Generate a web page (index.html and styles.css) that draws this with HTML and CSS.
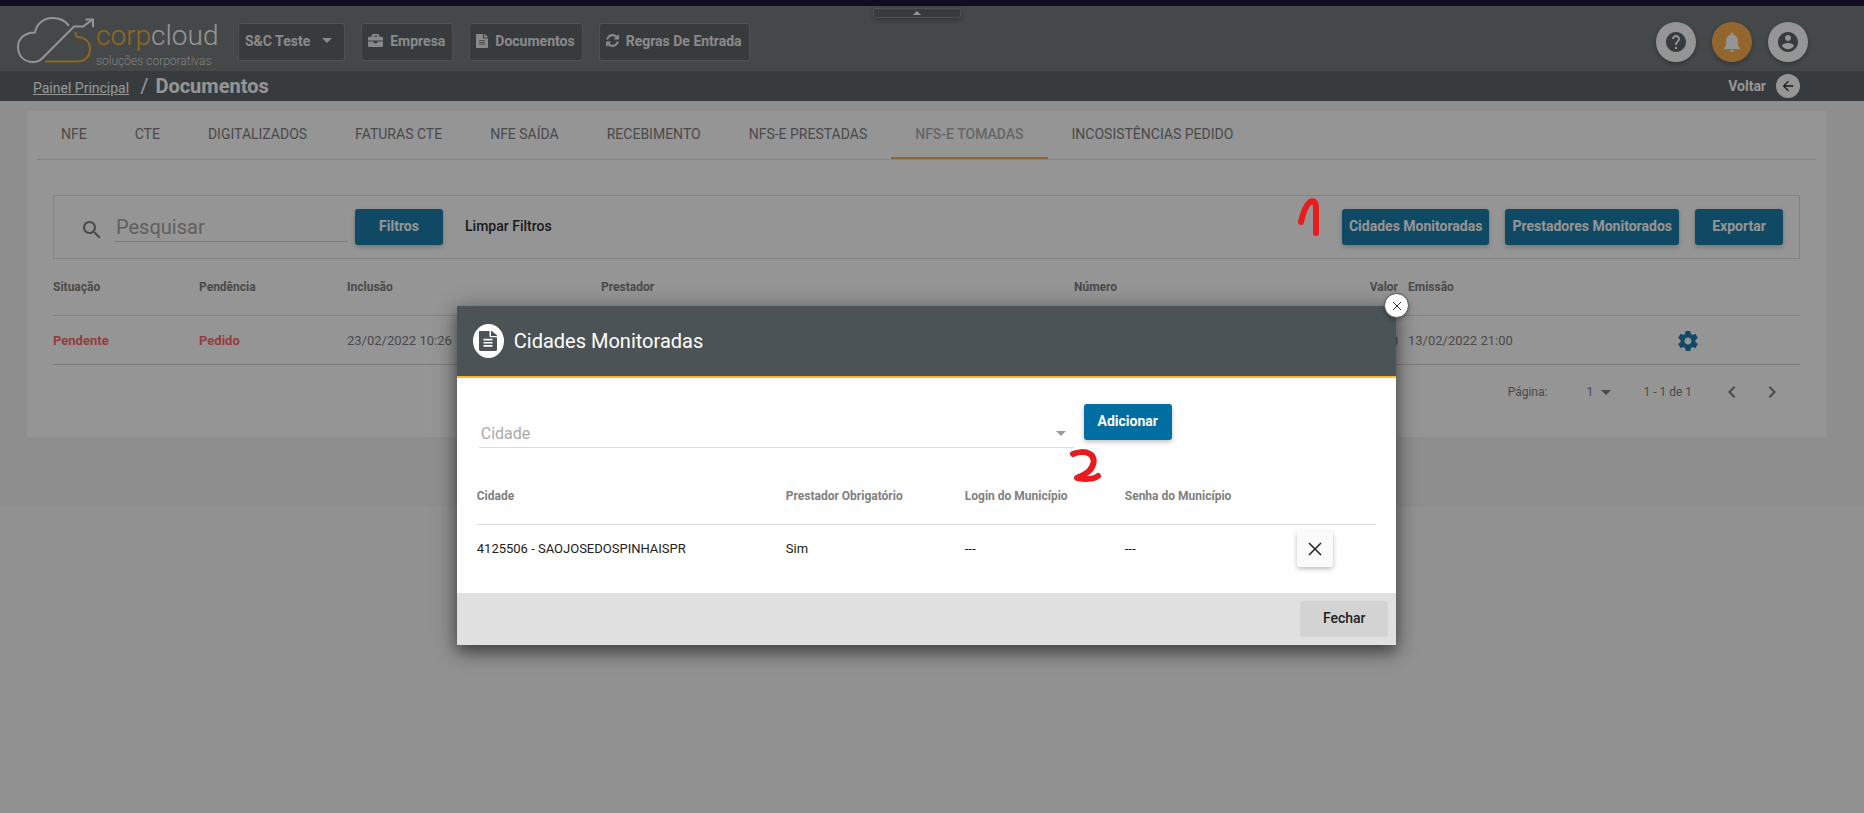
FILE: index.html
```html
<!DOCTYPE html>
<html lang="pt-BR">
<head>
<meta charset="utf-8">
<title>Corpcloud - Documentos</title>
<link rel="stylesheet" href="styles.css">
</head>
<body>
<div class="top-strip"></div>
<div class="app">
  <header class="header">
    <a class="logo" href="#" aria-label="Corpcloud">
      <svg class="logo-mark" viewBox="0 0 80 50" width="80" height="50" fill="none" stroke-width="2">
        <path stroke="#fff" d="M52 9C48 3 42 1 35.500 1 26.500 1 19.500 7 18 15.500 8 15.500 1 21.500 1 30 1 39 7 45 16.500 45 20 45 22.500 44 25 41.500L57 9.500H66L75 3"/>
        <path stroke="#fff" d="M68.500 2.500H76V10"/>
        <path stroke="#f7a81b" d="M58 15 60 20C68 20 73 25 73 32 73 40 67.500 44.500 59.500 44.500H28"/>
      </svg>
      <span class="logo-words">
        <span class="logo-name"><span class="logo-corp">corp</span>cloud</span>
        <span class="logo-tag">soluções corporativas</span>
      </span>
    </a>
    <nav class="nav">
      <button class="nav-btn nav-account" type="button">S&amp;C Teste <span class="caret"></span></button>
      <button class="nav-btn" type="button"><svg viewBox="0 0 512 512" width="15" height="15"><path d="M320 336c0 8.840-7.160 16-16 16h-96c-8.840 0-16-7.160-16-16v-48H0v144c0 25.600 22.400 48 48 48h416c25.600 0 48-22.400 48-48V288H320v48zm144-208h-80V80c0-25.600-22.400-48-48-48H176c-25.600 0-48 22.400-48 48v48H48c-25.600 0-48 22.400-48 48v80h512v-80c0-25.600-22.400-48-48-48zm-144 0H192V96h128v32z"/></svg>Empresa</button>
      <button class="nav-btn" type="button"><svg viewBox="0 0 384 512" width="12" height="14" preserveAspectRatio="none"><path d="M224 136V0H24C10.700 0 0 10.700 0 24v464c0 13.300 10.700 24 24 24h336c13.300 0 24-10.700 24-24V160H248c-13.200 0-24-10.800-24-24zm64 236c0 6.600-5.400 12-12 12H108c-6.600 0-12-5.400-12-12v-8c0-6.600 5.400-12 12-12h168c6.600 0 12 5.400 12 12v8zm0-64c0 6.600-5.400 12-12 12H108c-6.600 0-12-5.400-12-12v-8c0-6.600 5.400-12 12-12h168c6.600 0 12 5.400 12 12v8zm0-72v8c0 6.600-5.400 12-12 12H108c-6.600 0-12-5.400-12-12v-8c0-6.600 5.400-12 12-12h168c6.600 0 12 5.400 12 12zm96-114.100v6.100H256V0h6.100c6.400 0 12.500 2.500 17 7l97.900 98c4.500 4.500 7 10.600 7 16.900z"/></svg>Documentos</button>
      <button class="nav-btn" type="button"><svg viewBox="0 0 1536 1536" width="13" height="13"><path d="M1511 928q0 5-1 7-64 268-268 434.500t-478 166.500q-146 0-282.500-55t-243.500-157l-129 129q-19 19-45 19t-45-19-19-45v-448q0-26 19-45t45-19h448q26 0 45 19t19 45-19 45l-137 137q71 66 161 102t187 36q134 0 250-65t186-179q11-17 53-117 8-23 30-23h192q13 0 22.500 9.500t9.500 22.500zm25-800v448q0 26-19 45t-45 19h-448q-26 0-45-19t-19-45 19-45l138-138q-148-137-349-137-134 0-250 65t-186 179q-11 17-53 117-8 23-30 23h-199q-13 0-22.500-9.500t-9.500-22.500v-7q65-268 270-434.500t480-166.500q146 0 284 55.500t245 156.500l130-129q19-19 45-19t45 19 19 45z"/></svg>Regras De Entrada</button>
    </nav>
    <div class="header-actions">
      <button class="round" type="button" aria-label="Ajuda"><svg viewBox="0 0 24 24" width="24" height="24"><path d="M12 2C6.480 2 2 6.480 2 12s4.480 10 10 10 10-4.480 10-10S17.520 2 12 2zm1 17h-2v-2h2v2zm2.070-7.750l-.9.920C13.450 12.900 13 13.500 13 15h-2v-.5c0-1.100.45-2.100 1.170-2.830l1.240-1.260c.37-.36.59-.86.59-1.410 0-1.100-.9-2-2-2s-2 .9-2 2H8c0-2.210 1.790-4 4-4s4 1.790 4 4c0 .88-.36 1.680-.93 2.250z"/></svg></button>
      <button class="round round-alert" type="button" aria-label="Notificações"><svg viewBox="0 0 24 24" width="24" height="24"><path d="M12 22c1.100 0 2-.9 2-2h-4c0 1.100.89 2 2 2zm6-6v-5c0-3.070-1.640-5.640-4.500-6.320V4c0-.83-.67-1.500-1.500-1.500s-1.500.67-1.500 1.500v.68C7.630 5.360 6 7.920 6 11v5l-2 2v1h16v-1l-2-2z"/></svg></button>
      <button class="round" type="button" aria-label="Conta"><svg viewBox="0 0 24 24" width="24" height="24"><path d="M12 2C6.480 2 2 6.480 2 12s4.480 10 10 10 10-4.480 10-10S17.520 2 12 2zm0 3c1.660 0 3 1.340 3 3s-1.340 3-3 3-3-1.340-3-3 1.340-3 3-3zm0 14.200c-2.500 0-4.710-1.280-6-3.220.03-1.990 4-3.080 6-3.080 1.990 0 5.970 1.090 6 3.080-1.290 1.940-3.500 3.220-6 3.220z"/></svg></button>
    </div>
    <button class="collapse" type="button" aria-label="Recolher cabeçalho"><span class="caret-up"></span></button>
  </header>
  <div class="crumbs">
    <a class="crumb-link" href="#">Painel Principal</a>
    <span class="crumb-sep">/</span>
    <h1 class="crumb-title">Documentos</h1>
    <button class="back" type="button">Voltar<span class="back-icon"><svg viewBox="0 0 24 24" width="16" height="16"><path d="M20 11H7.830l5.590-5.590L12 4l-8 8 8 8 1.410-1.410L7.830 13H20v-2z"/></svg></span></button>
  </div>
  <div class="stage">
    <main class="card">
      <div class="tabs" role="tablist">
        <button class="tab" role="tab" type="button">NFE</button>
        <button class="tab" role="tab" type="button">CTE</button>
        <button class="tab" role="tab" type="button">DIGITALIZADOS</button>
        <button class="tab" role="tab" type="button">FATURAS CTE</button>
        <button class="tab" role="tab" type="button">NFE SAÍDA</button>
        <button class="tab" role="tab" type="button">RECEBIMENTO</button>
        <button class="tab" role="tab" type="button">NFS-E PRESTADAS</button>
        <button class="tab tab-active" role="tab" type="button" aria-selected="true">NFS-E TOMADAS</button>
        <button class="tab" role="tab" type="button">INCOSISTÊNCIAS PEDIDO</button>
      </div>
      <div class="content">
        <div class="toolbar">
          <label class="search-icon" for="search" aria-label="Pesquisar"><svg viewBox="0 0 24 24" width="24" height="24"><path d="M15.500 14h-.79l-.28-.27C15.410 12.590 16 11.110 16 9.500 16 5.910 13.090 3 9.500 3S3 5.910 3 9.500 5.910 16 9.500 16c1.610 0 3.090-.59 4.230-1.570l.27.28v.79l5 4.990L20.490 19l-4.990-5zm-6 0C7.010 14 5 11.990 5 9.500S7.010 5 9.500 5 14 7.010 14 9.500 11.990 14 9.500 14z"/></svg></label>
          <input class="search" id="search" type="text" placeholder="Pesquisar">
          <button class="btn" type="button">Filtros</button>
          <button class="btn-flat" type="button">Limpar Filtros</button>
          <div class="toolbar-end">
            <button class="btn" type="button">Cidades Monitoradas</button>
            <button class="btn" type="button">Prestadores Monitorados</button>
            <button class="btn" type="button">Exportar</button>
          </div>
        </div>
        <table class="grid docs">
          <colgroup><col class="d1"><col class="d2"><col class="d3"><col class="d4"><col class="d5"><col class="d6"><col class="d7"><col class="d8"></colgroup>
          <thead><tr><th>Situação</th><th>Pendência</th><th>Inclusão</th><th>Prestador</th><th>Número</th><th class="num">Valor</th><th>Emissão</th><th></th></tr></thead>
          <tbody><tr><td class="warn">Pendente</td><td class="warn">Pedido</td><td>23/02/2022 10:26</td><td></td><td></td><td class="num">0</td><td>13/02/2022 21:00</td>
          <td><button class="gear" type="button" aria-label="Opções"><svg viewBox="0 0 24 24" width="24" height="24"><path d="M19.430 12.980c.04-.32.07-.64.07-.98s-.03-.66-.07-.98l2.110-1.650c.19-.15.24-.42.12-.64l-2-3.460c-.12-.22-.39-.3-.61-.22l-2.490 1c-.52-.4-1.080-.73-1.690-.98l-.38-2.650C14.460 2.180 14.250 2 14 2h-4c-.25 0-.46.18-.49.42l-.38 2.650c-.61.25-1.170.59-1.690.98l-2.490-1c-.23-.09-.49 0-.61.22l-2 3.460c-.13.22-.07.49.12.64l2.110 1.650c-.04.32-.07.65-.07.98s.03.66.07.98l-2.110 1.650c-.19.15-.24.42-.12.64l2 3.460c.12.22.39.3.61.22l2.490-1c.52.4 1.080.73 1.690.98l.38 2.650c.03.24.24.42.49.42h4c.25 0 .46-.18.49-.42l.38-2.650c.61-.25 1.170-.59 1.690-.98l2.490 1c.23.09.49 0 .61-.22l2-3.460c.12-.22.07-.49-.12-.64l-2.110-1.650zM12 15.500c-1.930 0-3.500-1.570-3.500-3.500s1.570-3.500 3.500-3.500 3.500 1.570 3.500 3.500-1.570 3.500-3.500 3.500z"/></svg></button></td></tr></tbody>
        </table>
        <div class="pager">
          <label for="page">Página:</label>
          <span class="page-pick"><select class="page-select" id="page"><option>1</option></select><span class="caret"></span></span>
          <span>1 - 1 de 1</span>
          <button class="step" type="button" aria-label="Anterior"><svg viewBox="0 0 24 24" width="24" height="24"><path d="M15.410 7.410L14 6l-6 6 6 6 1.410-1.410L10.830 12z"/></svg></button>
          <button class="step" type="button" aria-label="Próxima"><svg viewBox="0 0 24 24" width="24" height="24"><path d="M10 6L8.590 7.410 13.170 12l-4.580 4.590L10 18l6-6z"/></svg></button>
        </div>
      </div>
    </main>
  </div>
</div>
<div class="backdrop">
  <section class="modal" role="dialog" aria-labelledby="modal-title">
    <button class="close" type="button" aria-label="Fechar janela"><svg viewBox="0 0 10 10" width="10" height="10"><path d="M1 1 9 9M9 1 1 9"/></svg></button>
    <header class="modal-head">
      <span class="modal-icon"><svg viewBox="0 0 384 512" width="18" height="20" preserveAspectRatio="none"><path d="M224 136V0H24C10.700 0 0 10.700 0 24v464c0 13.300 10.700 24 24 24h336c13.300 0 24-10.700 24-24V160H248c-13.200 0-24-10.800-24-24zm64 264H96v-40h192v40zm0-80H96v-40h192v40zm0-80H96v-40h192v40zm96-118.100v6.100H256V0h6.100c6.400 0 12.500 2.500 17 7l97.900 98c4.500 4.500 7 10.600 7 16.900z"/></svg></span>
      <h2 class="modal-title" id="modal-title">Cidades Monitoradas</h2>
    </header>
    <div class="modal-body">
      <div class="add-row">
        <span class="city-field"><select class="city" aria-label="Cidade"><option>Cidade</option></select><span class="caret"></span></span>
        <button class="btn" type="button">Adicionar</button>
      </div>
      <table class="grid cities">
        <colgroup><col class="c1"><col class="c2"><col class="c3"><col class="c4"><col class="c5"></colgroup>
        <thead><tr><th>Cidade</th><th>Prestador Obrigatório</th><th>Login do Município</th><th>Senha do Município</th><th></th></tr></thead>
        <tbody><tr><td>4125506 - SAOJOSEDOSPINHAISPR</td><td>Sim</td><td>---</td><td>---</td><td><button class="remove" type="button" aria-label="Remover"><svg viewBox="0 0 14 14" width="14" height="14"><path d="M1 1 13 13M13 1 1 13"/></svg></button></td></tr></tbody>
      </table>
    </div>
    <footer class="modal-foot"><button class="btn btn-grey" type="button">Fechar</button></footer>
    <svg class="pen pen-two" viewBox="0 0 34 36" width="34" height="36" role="img" aria-label="Passo 2"><path d="M4 6C8 4 16 3 21 6 27 10 25 18 20 23 17 26 12 28 8 30 14 31 24 32 29 28"/></svg>
  </section>
</div>
<svg class="pen pen-one" viewBox="0 0 24 42" width="24" height="42" role="img" aria-label="Passo 1"><path d="M4 25C6 16 8 9 13 5 19 2 19 8 19 14V36"/></svg>
</body>
</html>
```
FILE: styles.css
```css
* { box-sizing: border-box; }

body {
  margin: 0;
  position: relative;
  min-height: 100vh;
  display: flex;
  flex-direction: column;
  background: #f8f8f8;
  color: #6f6f6f;
  font: 14px/20px Roboto, "Liberation Sans", sans-serif;
}

button, input, select { font: inherit; color: inherit; border: 0; padding: 0; margin: 0; background: none; }
button { display: inline-flex; align-items: center; justify-content: center; white-space: nowrap; }
svg { display: block; fill: currentColor; flex: none; }
h1, h2 { margin: 0; }

.top-strip { height: 6px; background: #110c22; position: relative; z-index: 3; }
.app { flex: 1; }

.caret { border: 5px solid transparent; border-top-color: currentColor; border-bottom: 0; }
.caret-up { border: 4px solid transparent; border-bottom-color: #fff; border-top: 0; }

/* Header */
.header {
  position: relative;
  display: flex;
  align-items: center;
  height: 65px;
  padding: 6px 56px 0 17px;
  background: #646c6e;
  color: #fff;
}
.logo { display: flex; width: 221px; color: #fff; text-decoration: none; }
.logo-mark { fill: none; margin-top: 2px; }
.logo-words { display: flex; flex-direction: column; padding: 4px 0 0; margin-left: -1px; }
.logo-name { font: 300 28px/34px Roboto, sans-serif; }
.logo-corp { color: #f7a81b; }
.logo-tag { font: 300 12px/16px Roboto, sans-serif; color: #d8d8d8; white-space: nowrap; }

.nav { display: flex; gap: 16px; }
.nav-btn {
  height: 38px;
  padding: 0 7px 2px 6px;
  gap: 7px;
  background: #4c5356;
  border: 1px solid #777e80;
  border-radius: 3px;
  color: #e8e8e8;
  font-weight: 700;
}
.nav-account { padding-right: 12px; gap: 12px; }

.header-actions { display: flex; gap: 16px; margin-left: auto; }
.round {
  width: 40px;
  height: 40px;
  border-radius: 50%;
  background: #fff;
  color: #4c5356;
  box-shadow: 0 2px 5px rgba(0, 0, 0, .35);
}
.round-alert { background: #fba63b; color: #fff; }
.collapse {
  position: absolute;
  top: 2px;
  left: 50%;
  margin-left: -59px;
  width: 88px;
  height: 10px;
  background: #4c5356;
  border: 1px solid #777e80;
  border-radius: 2px;
  box-shadow: 0 2px 5px rgba(0, 0, 0, .35);
}

.crumbs {
  display: flex;
  align-items: center;
  height: 30px;
  padding: 0 64px 0 33px;
  background: #4c5356;
  color: #fff;
}
.crumb-link { color: inherit; padding-top: 4px; }
.crumb-sep { margin: 0 7px 0 11px; font-size: 20px; }
.crumb-title { font-size: 20px; font-weight: 700; }
.back { margin-left: auto; gap: 10px; font-weight: 700; }
.back-icon { display: grid; place-items: center; width: 24px; height: 24px; border-radius: 50%; background: #fff; color: #111; }

/* Page card */
.stage { background: #f1f1f1; padding: 10px 38px 70px 27px; }
.card { background: #fff; padding: 0 10px 17px; }
.tabs { display: flex; border-bottom: 1px solid #dcdcdc; }
.tab { height: 48px; padding: 0 24px 2px; border-top: 2px solid transparent; border-bottom: 2px solid transparent; }
.tab-active { color: #a6a6a6; font-weight: 500; border-bottom-color: #fba63b; }
.content { padding: 35px 16px 0; }

.toolbar { display: flex; align-items: center; height: 64px; padding: 0 16px 0 26px; border: 1px solid #dcdcdc; }
.search-icon { margin-right: 10px; padding-top: 6px; }
.search { width: 234px; height: 29px; padding: 0 2px; margin-right: 7px; border-bottom: 1px solid #d0d0d0; font-size: 20px; outline: 0; }
.search::placeholder { color: #999; }
.btn {
  min-width: 88px;
  height: 36px;
  padding: 0 7px 2px;
  border-radius: 3px;
  background: #006ea0;
  color: #fff;
  font-weight: 700;
  box-shadow: 0 2px 5px rgba(0, 0, 0, .26);
}
.btn-flat { margin-left: 22px; padding-bottom: 2px; color: #111; font-weight: 500; }
.toolbar-end { display: flex; gap: 16px; margin-left: auto; }

.grid { width: 100%; border-collapse: collapse; table-layout: fixed; }
.grid th, .grid td { padding: 0; text-align: left; white-space: nowrap; }
.grid th { height: 56px; font-size: 12px; font-weight: 700; border-bottom: 1px solid #dcdcdc; }
.grid td { height: 49px; padding-top: 2px; font-size: 13px; }
.grid .num { text-align: right; padding-right: 10px; }
.grid .warn { color: #ff5557; font-weight: 700; }
.docs td { border-bottom: 1px solid #d0d0d0; }
.d1 { width: 146px; }
.d2 { width: 148px; }
.d3 { width: 254px; }
.d5 { width: 15%; }
.d6 { width: 72px; }
.d7 { width: 268px; }
.d8 { width: 124px; }
.gear { display: flex; color: #006ea0; }

.pager { display: flex; align-items: center; justify-content: flex-end; height: 55px; padding-right: 16px; font-size: 12px; }
.page-pick { display: flex; align-items: center; gap: 8px; margin: 0 32px 0 39px; }
.page-select { appearance: none; }
.step { width: 24px; margin-left: 16px; }
.pager span + .step { margin-left: 28px; }

/* Modal */
.backdrop {
  position: absolute;
  inset: 6px 0 0;
  z-index: 2;
  padding: 300px 11px 0 0;
  background: rgba(33, 33, 33, .48);
}
.modal { position: relative; width: 50.7%; margin: 0 auto; background: #fff; box-shadow: 0 7px 14px rgba(0, 0, 0, .4), 0 4px 24px rgba(0, 0, 0, .3); }
.modal-head { display: flex; align-items: center; gap: 10px; height: 72px; padding-left: 16px; background: #4c5356; border-bottom: 2px solid #fbb53b; color: #fff; }
.modal-icon { display: grid; place-items: center; width: 31px; height: 34px; border-radius: 50%; background: #fff; color: #4c5356; }
.modal-title { font-size: 20px; font-weight: 400; }
.close {
  position: absolute;
  top: -13px;
  right: -13px;
  width: 25px;
  height: 25px;
  border: 1px solid #4c5356;
  border-radius: 50%;
  background: #fff;
  color: #333;
  box-shadow: 0 2px 5px rgba(0, 0, 0, .3);
}
.close path { stroke: #333; stroke-width: 1; }
.modal-body { padding: 26px 20px; }
.add-row { display: flex; align-items: flex-start; padding-left: 2px; margin-bottom: 20px; }
.city-field { display: flex; align-items: center; width: 595px; height: 28px; margin: 16px 10px 0 0; border-bottom: 1px solid #dcdcdc; color: #aaa; }
.city { appearance: none; flex: 1; padding-left: 2px; font-size: 16px; }
.city-field .caret { margin-right: 8px; color: #999; }
.cities th { color: #808080; }
.cities td { height: 43px; padding-top: 7px; color: #212121; }
.cities td:last-child { padding-top: 6px; vertical-align: top; }
.c1 { width: 309px; }
.c2 { width: 179px; }
.c3 { width: 160px; }
.c4 { width: 172px; }
.remove { width: 36px; height: 36px; border-radius: 3px; background: #fafafa; box-shadow: 0 2px 5px rgba(0, 0, 0, .26); }
.remove path { stroke: #212121; stroke-width: 1.5px; }
.modal-foot { display: flex; justify-content: flex-end; padding: 8px; background: #e0e0e0; }
.btn-grey { background: #d3d3d3; color: #212121; font-weight: 500; box-shadow: none; }

/* Hand-drawn step marks */
.pen { position: absolute; fill: none; stroke: #e81c1c; stroke-width: 6; stroke-linecap: round; stroke-linejoin: round; }
.pen-one { z-index: 4; top: 197px; right: 543px; }
.pen-two { top: 142px; right: 293px; }
```
